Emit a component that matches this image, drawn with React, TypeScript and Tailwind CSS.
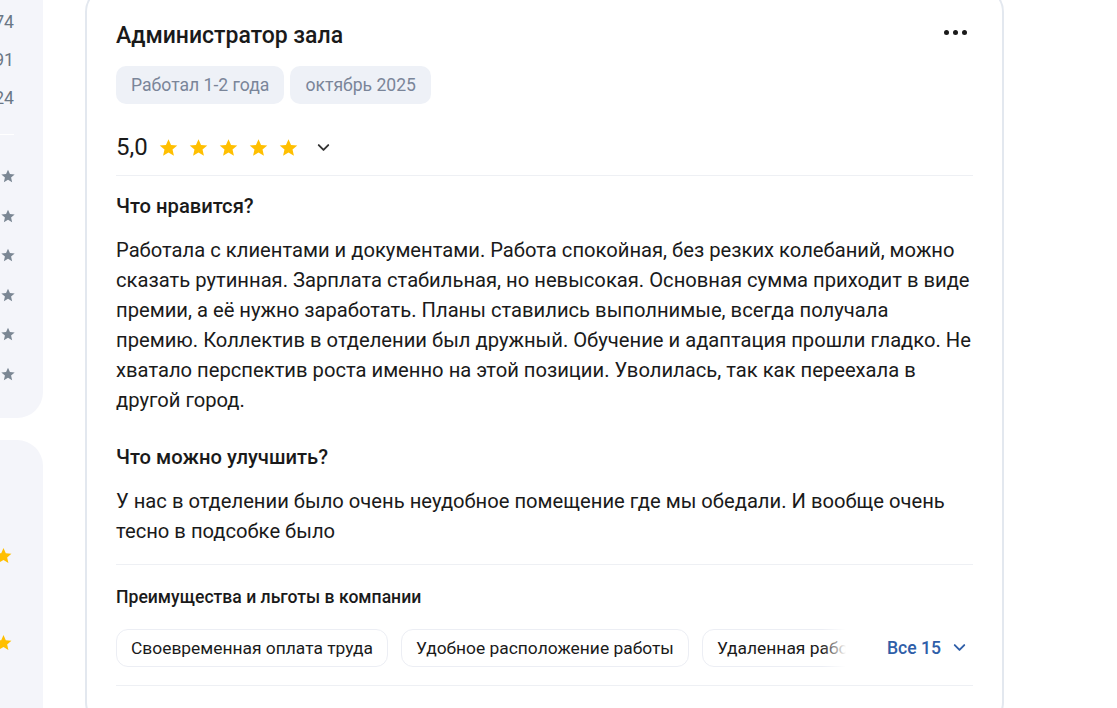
import React from 'react';

const Star = ({ className }: { className: string }) => (
  <svg viewBox="0 0 24 24" className={className} fill="currentColor">
    <path d="M12 2.5l2.9 6.6 7.1.6-5.4 4.7 1.6 7-6.2-3.7-6.2 3.7 1.6-7L2 9.7l7.1-.6z" />
  </svg>
);

const Chevron = ({ className }: { className: string }) => (
  <svg viewBox="0 0 24 24" className={className} fill="none" stroke="currentColor" strokeWidth="2.4" strokeLinecap="round" strokeLinejoin="round">
    <path d="M6 9l6 6 6-6" />
  </svg>
);

const Sidebar = () => (
  <div className="flex w-[43px] shrink-0 flex-col">
    <div className="flex h-[418px] shrink-0 flex-col items-end rounded-br-[26px] bg-[#f4f5fa] pr-[29px] pt-[10px] text-[17.6px] text-[#6b7785]">
      <div className="h-[38px] leading-[24px]">74</div>
      <div className="h-[38px] leading-[24px]">91</div>
      <div className="h-[38px] leading-[24px]">24</div>
      <div className="mt-[10px] h-px w-[14px] bg-white" />
      <div className="mt-[33px] flex flex-col gap-[23.5px]">
        {[0, 1, 2, 3, 4, 5].map((i) => (
          <Star key={i} className="-mr-[2px] h-[16px] w-[16px] text-[#7b8794]" />
        ))}
      </div>
    </div>
    <div className="mt-[22px] flex h-[300px] shrink-0 flex-col items-end rounded-tr-[26px] bg-[#f4f5fa] pt-[106px]">
      <Star className="mr-[30px] h-[19px] w-[19px] text-[#ffbf00]" />
      <Star className="mr-[30px] mt-[68px] h-[19px] w-[19px] text-[#ffbf00]" />
    </div>
  </div>
);

const Tag = ({ children }: { children: React.ReactNode }) => (
  <div className="flex h-[38px] items-center rounded-[10px] bg-[#eef1f7] px-[15px] text-[17.6px] text-[#7a8599]">{children}</div>
);

const Chip = ({ children }: { children: React.ReactNode }) => (
  <div className="flex h-[38px] shrink-0 items-center whitespace-nowrap rounded-[12px] border border-[#eceef4] px-[14px] text-[17.4px] text-[#1a1a1a]">{children}</div>
);

export default function App() {
  return (
    <div className="flex h-[708px] w-[1117px] overflow-hidden bg-white font-['Roboto',sans-serif] text-[#1a1a1a]">
      <Sidebar />
      <div className="ml-[42px] -mt-[14px] flex w-[919px] shrink-0 flex-col self-start rounded-[26px] border-2 border-[#e3e8ef] px-[29px] pt-[32px]">
        <div className="flex items-start justify-between">
          <h1 className="text-[23px] font-medium leading-[32px]">Администратор зала</h1>
          <div className="mr-[6px] mt-[10px] flex gap-[4px]">
            <span className="h-[5px] w-[5px] rounded-full bg-[#1a1a1a]" />
            <span className="h-[5px] w-[5px] rounded-full bg-[#1a1a1a]" />
            <span className="h-[5px] w-[5px] rounded-full bg-[#1a1a1a]" />
          </div>
        </div>
        <div className="mt-[14px] flex gap-[6px]">
          <Tag>Работал 1-2 года</Tag>
          <Tag>октябрь 2025</Tag>
        </div>
        <div className="mt-[28px] flex h-[30px] items-center">
          <span className="text-[24px] leading-[30px]">5,0</span>
          <div className="ml-[10px] flex gap-[9px]">
            {[0, 1, 2, 3, 4].map((i) => (
              <Star key={i} className="h-[21px] w-[21px] text-[#ffbf00]" />
            ))}
          </div>
          <Chevron className="ml-[15px] h-[19px] w-[19px] text-[#333]" />
        </div>
        <div className="mt-[13px] h-px bg-[#eef0f4]" />
        <h2 className="mt-[18px] text-[20.2px] font-medium leading-[24px]">Что нравится?</h2>
        <p className="mt-[17px] text-[20.2px] leading-[30px]">
          Работала с клиентами и документами. Работа спокойная, без резких колебаний, можно сказать рутинная. Зарплата стабильная, но невысокая. Основная сумма приходит в виде премии, а её нужно заработать. Планы ставились выполнимые, всегда получала премию. Коллектив в отделении был дружный. Обучение и адаптация прошли гладко. Не хватало перспектив роста именно на этой позиции. Уволилась, так как переехала в другой город.
        </p>
        <h2 className="mt-[30px] text-[20.2px] font-medium leading-[24px]">Что можно улучшить?</h2>
        <p className="mt-[17px] text-[20.2px] leading-[30px]">
          У нас в отделении было очень неудобное помещение где мы обедали. И вообще очень тесно в подсобке было
        </p>
        <div className="mt-[18px] h-px bg-[#eef0f4]" />
        <h3 className="mt-[21px] text-[17.6px] font-medium leading-[22px]">Преимущества и льготы в компании</h3>
        <div className="mt-[21px] flex items-center">
          <div className="relative flex w-[730px] gap-[13px] overflow-hidden">
            <Chip>Своевременная оплата труда</Chip>
            <Chip>Удобное расположение работы</Chip>
            <Chip>Удаленная работа</Chip>
            <Chip>Корпоративное обучение</Chip>
            <div className="absolute inset-y-0 right-0 w-[24px] bg-gradient-to-r from-transparent to-white" />
          </div>
          <div className="ml-[41px] flex shrink-0 items-center whitespace-nowrap text-[17.6px] font-medium text-[#2f5ea8]">
            Все 15
            <Chevron className="ml-[9px] h-[19px] w-[19px]" />
          </div>
        </div>
        <div className="mt-[18px] h-px bg-[#eef0f4]" />
        <div className="h-[40px]" />
      </div>
    </div>
  );
}
